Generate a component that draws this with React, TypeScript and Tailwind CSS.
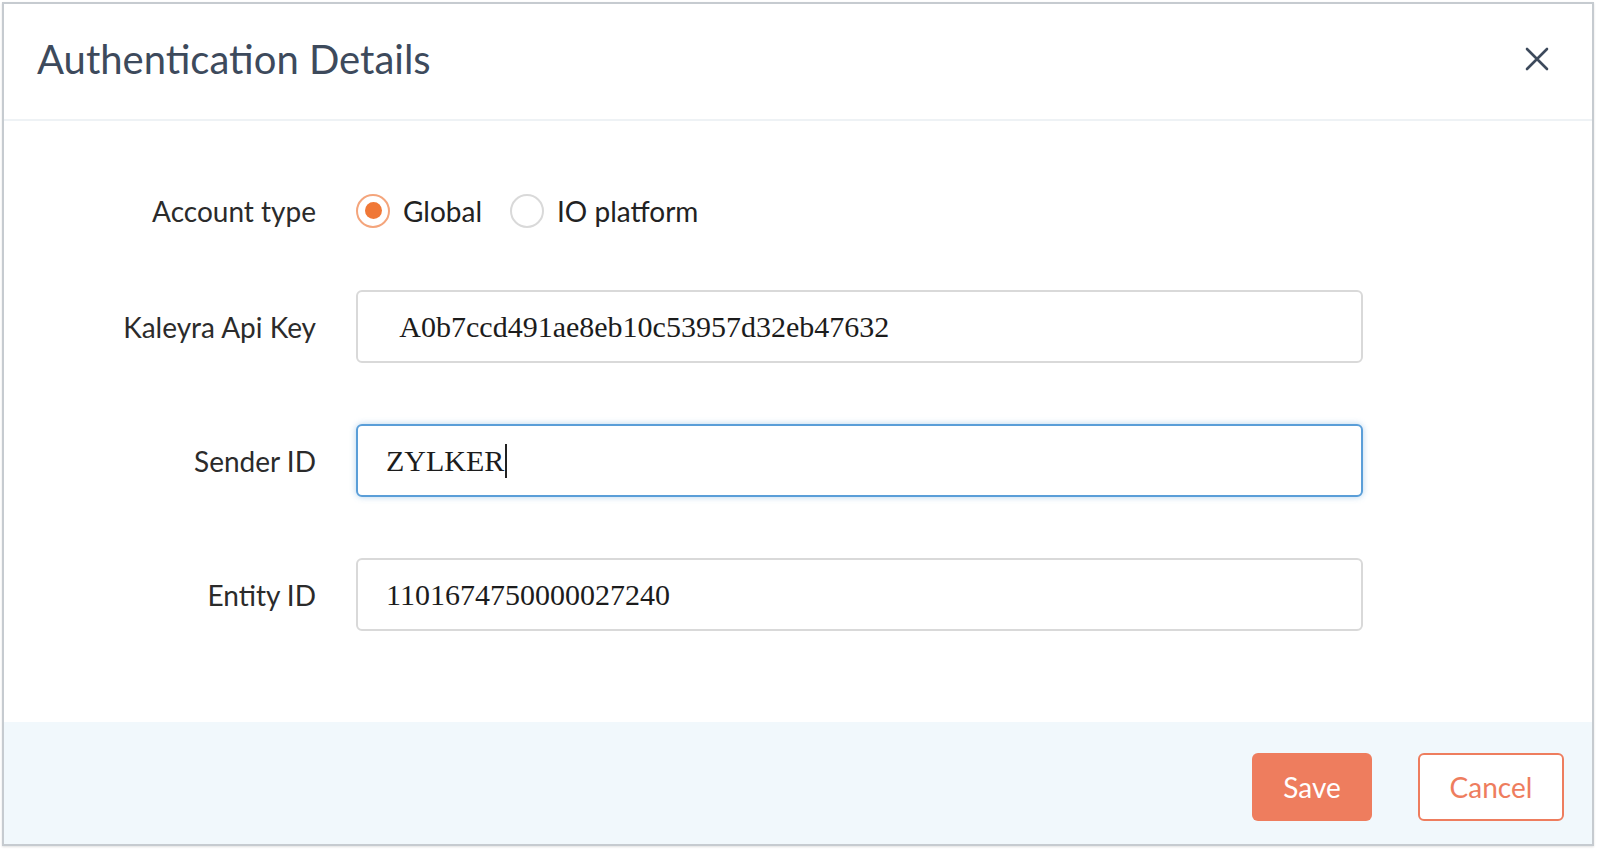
const lato = { fontFamily: "Lato, 'Liberation Sans', sans-serif" };
const serif = { fontFamily: "'Liberation Serif', 'Times New Roman', serif" };

function CloseIcon() {
  return (
    <svg width="26" height="26" viewBox="0 0 26 26" fill="none">
      <path d="M3 3L23 23M23 3L3 23" stroke="#3d4a5c" strokeWidth="2.6" strokeLinecap="round" />
    </svg>
  );
}

function Radio({ label, checked }: { label: string; checked?: boolean }) {
  return (
    <label className="flex items-center gap-[13px] cursor-pointer">
      {checked ? (
        <span className="flex h-[34px] w-[34px] items-center justify-center rounded-full border-[2px] border-[#f4a57c] bg-white">
          <span className="h-[17px] w-[17px] rounded-full bg-[#f07837]" />
        </span>
      ) : (
        <span className="h-[34px] w-[34px] rounded-full border-[2px] border-[#d9d9d9] bg-white" />
      )}
      <span className="text-[28px] text-[#222]">{label}</span>
    </label>
  );
}

function Field({ value, focused }: { value: string; focused?: boolean }) {
  return (
    <div
      className={
        focused
          ? "flex h-[73px] w-[1007px] items-center rounded-[6px] border-[2px] border-[#5a9ed8] bg-white px-[28px] shadow-[0_0_6px_rgba(90,158,216,0.45)]"
          : "flex h-[73px] w-[1007px] items-center rounded-[6px] border-[2px] border-[#d9d9d9] bg-white px-[28px]"
      }
    >
      <span className="whitespace-pre text-[30px] text-[#1c1c1c]" style={serif}>
        {value}
      </span>
      {focused && <span className="ml-[1px] h-[34px] w-[2px] bg-[#222]" />}
    </div>
  );
}

function Row({ label, children }: { label: string; children: React.ReactNode }) {
  return (
    <div className="flex h-[73px] items-center">
      <div className="w-[312px] text-right text-[28px] text-[#2b2b2b]">{label}</div>
      <div className="ml-[40px] flex items-center gap-[28px]">{children}</div>
    </div>
  );
}

export default function App() {
  return (
    <div className="h-[849px] w-[1597px] bg-white pt-[2px] pl-[2px] pr-[3px]" style={lato}>
      <div className="flex h-[844px] flex-col border-[2px] border-[#c6cbd0] bg-white shadow-[0_1px_2px_rgba(0,0,0,0.12)]">
        {/* header */}
        <div className="flex h-[117px] shrink-0 items-center justify-between border-b-[2px] border-[#eef2f5] pb-[6px] pl-[33px] pr-[42px]">
          <h1 className="text-[40px] font-normal text-[#3d4a5c]">Authentication Details</h1>
          <button className="flex items-center justify-center">
            <CloseIcon />
          </button>
        </div>

        {/* form */}
        <div className="flex flex-1 flex-col pt-[53px]">
          <Row label="Account type">
            <Radio label="Global" checked />
            <Radio label="IO platform" />
          </Row>
          <div className="mt-[43px] flex flex-col gap-[61px]">
            <Row label="Kaleyra Api Key">
              <Field value="  A0b7ccd491ae8eb10c53957d32eb47632" />
            </Row>
            <Row label="Sender ID">
              <Field value="ZYLKER" focused />
            </Row>
            <Row label="Entity ID">
              <Field value="1101674750000027240" />
            </Row>
          </div>
        </div>

        {/* footer */}
        <div className="flex h-[122px] shrink-0 items-start justify-end gap-[46px] bg-[#f1f8fc] pt-[31px] pr-[28px]">
          <button className="h-[68px] w-[120px] rounded-[6px] bg-[#ee7d5e] text-[28px] text-white">Save</button>
          <button className="h-[68px] w-[146px] rounded-[6px] border-[2px] border-[#ee7d5e] bg-white text-[28px] text-[#ee7d5e]">
            Cancel
          </button>
        </div>
      </div>
    </div>
  );
}
